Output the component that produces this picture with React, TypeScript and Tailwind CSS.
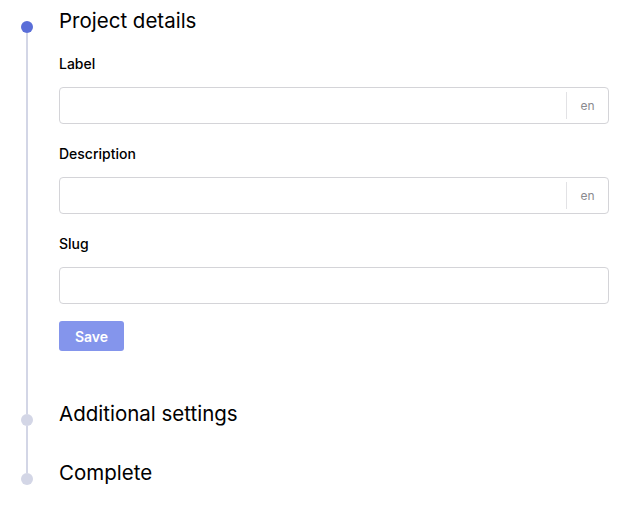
import React from "react";

function Field({ label, addon }: { label: string; addon?: boolean }) {
  return (
    <div className="flex flex-col">
      <label className="text-[14px] leading-[20px] font-medium text-[#000] mb-[13px]">{label}</label>
      <div className="flex h-[37px] rounded-[4px] border border-[#d4d4d8] bg-white">
        <input className="flex-1 min-w-0 px-3 outline-none bg-transparent text-[14px]" />
        {addon && (
          <div className="flex items-center my-[4px] border-l border-[#e2e2e5] w-[42px] justify-center text-[12px] text-[#8a8a8f]">
            en
          </div>
        )}
      </div>
    </div>
  );
}

function Step({
  title,
  active,
  first,
  last,
  children,
  pb,
}: {
  title: string;
  active?: boolean;
  first?: boolean;
  last?: boolean;
  children?: React.ReactNode;
  pb: string;
}) {
  return (
    <div className="flex">
      <div className="w-[54px] flex flex-col items-center shrink-0">
        <div className={`h-[21px] w-[2px] ${first ? "" : "bg-[#d3d6e6]"}`} />
        <div className={`w-[12px] h-[12px] rounded-full ${active ? "bg-[#5a6ed8]" : "bg-[#d3d6e6]"}`} />
        <div className={`flex-1 w-[2px] ${last ? "" : "bg-[#d3d6e6]"}`} />
      </div>
      <div className={`flex-1 ml-[5px] mr-[24px] pt-[7px] ${pb}`}>
        <h2 className="text-[20.5px] leading-[28px] text-[#000]">{title}</h2>
        {children}
      </div>
    </div>
  );
}

export default function App() {
  return (
    <div className="w-[633px] h-[520px] bg-white" style={{ fontFamily: 'Inter, "Liberation Sans", Arial, sans-serif' }}>
      <Step title="Project details" active first pb="pb-[42px]">
        <div className="mt-[19px] flex flex-col gap-[20px]">
          <Field label="Label" addon />
          <Field label="Description" addon />
          <Field label="Slug" />
        </div>
        <button className="mt-[17px] h-[30px] w-[65px] rounded-[3px] bg-[#8495ec] text-white text-[14px] font-semibold">
          Save
        </button>
      </Step>
      <Step title="Additional settings" pb="pb-[24px]" />
      <Step title="Complete" last pb="pb-[24px]" />
    </div>
  );
}
